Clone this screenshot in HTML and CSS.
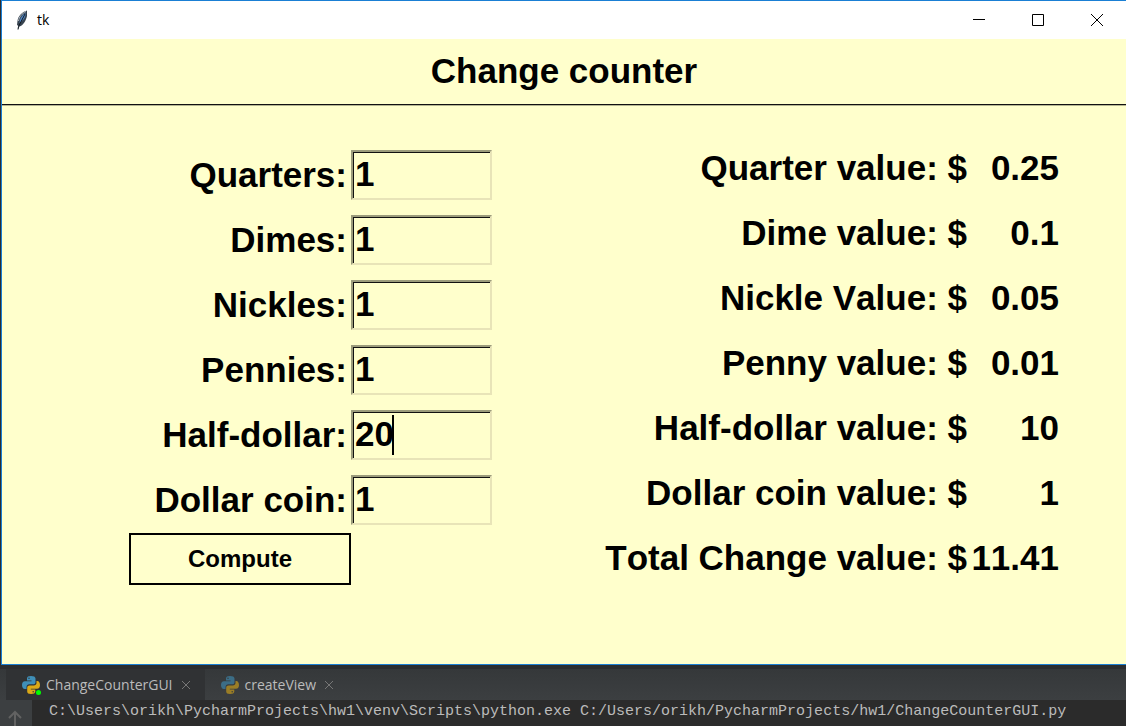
FILE: index.html
```html
<!DOCTYPE html>
<html lang="en">
<head>
<meta charset="utf-8">
<title>tk</title>
<link rel="stylesheet" href="styles.css">
</head>
<body>
<svg class="defs" aria-hidden="true">
  <symbol id="python" viewBox="0 0 18 18">
    <path fill="#3f8fb8" d="M9 0C6.300 0 5 .800 5 2.500V4.500H9.500V5.200H3C1 5.200 0 6.800 0 9s1 4 2.800 4H4.500V11c0-1.500 1.200-2.700 2.700-2.700h4.200c1.200 0 2.100-.900 2.100-2.100V2.500C13.500.800 11.700 0 9 0Z"/>
    <circle cx="7" cy="2.300" r=".8" fill="#3c3f41"/>
    <path fill="#dba917" d="M9 18c2.700 0 4.300-.800 4.300-2.500V13.500H8.800V12.800H15c2 0 3-1.600 3-3.800s-1-4-2.800-4H14.500V7c0 1.500-1.200 2.500-2.700 2.500H7.600C6.400 9.500 5.200 10.400 5.200 11.600V15.500C5.200 17.200 6.300 18 9 18Z"/>
    <circle cx="11.200" cy="15.700" r=".8" fill="#3c3f41"/>
  </symbol>
</svg>
<main class="window">
  <header class="titlebar">
    <svg class="feather" viewBox="0 0 14 20" aria-hidden="true">
      <path d="M12 .5C7 2 3 6 2.500 11L2 15l1.500 1L3 19.500l1.500-3C8 15.500 11 11 12 6Z" fill="#37434f"/>
      <path d="M10.500 3C7 5 5 8 4.500 13l4-3.500C10 7.500 11 5 10.500 3Z" fill="#4e86c6"/>
      <path d="M11 1.500C7 3.500 4 7 3.500 11" fill="none" stroke="#b4bdc6"/>
      <path d="M10 4 3.500 16.500 3 19.500" fill="none" stroke="#101820"/>
    </svg>
    <span class="caption">tk</span>
    <div class="controls">
      <button type="button" class="control" aria-label="Minimize"><svg viewBox="0 0 12 12"><path d="M0 5.500H12"/></svg></button>
      <button type="button" class="control" aria-label="Maximize"><svg viewBox="0 0 12 12"><path d="M.5.500H11.500V11.500H.5Z"/></svg></button>
      <button type="button" class="control" aria-label="Close"><svg viewBox="0 0 12 12"><path d="M0 0 12 12M12 0 0 12"/></svg></button>
    </div>
  </header>
  <h1 class="heading">Change counter</h1>
  <div class="panels">
    <form class="coins">
      <label for="quarters">Quarters:</label><div class="entry"><input id="quarters" value="1"></div>
      <label for="dimes">Dimes:</label><div class="entry"><input id="dimes" value="1"></div>
      <label for="nickles">Nickles:</label><div class="entry"><input id="nickles" value="1"></div>
      <label for="pennies">Pennies:</label><div class="entry"><input id="pennies" value="1"></div>
      <label for="half">Half-dollar:</label><div class="entry"><input id="half" value="20"><span class="caret"></span></div>
      <label for="dollar">Dollar coin:</label><div class="entry"><input id="dollar" value="1"></div>
      <button type="button" class="compute">Compute</button>
    </form>
    <table class="values">
      <tr><th scope="row">Quarter value: $</th><td>0.25</td></tr>
      <tr><th scope="row">Dime value: $</th><td>0.1</td></tr>
      <tr><th scope="row">Nickle Value: $</th><td>0.05</td></tr>
      <tr><th scope="row">Penny value: $</th><td>0.01</td></tr>
      <tr><th scope="row">Half-dollar value: $</th><td>10</td></tr>
      <tr><th scope="row">Dollar coin value: $</th><td>1</td></tr>
      <tr><th scope="row">Total Change value: $</th><td>11.41</td></tr>
    </table>
  </div>
</main>
<section class="ide">
  <nav class="tabs">
    <div class="tab active">
      <span class="badge"><svg class="python"><use href="#python"/></svg></span>
      <span>ChangeCounterGUI</span>
      <button type="button" class="close" aria-label="Close ChangeCounterGUI"><svg viewBox="0 0 10 10"><path d="M1 1 9 9M9 1 1 9"/></svg></button>
    </div>
    <div class="tab">
      <svg class="python dim"><use href="#python"/></svg>
      <span>createView</span>
      <button type="button" class="close" aria-label="Close createView"><svg viewBox="0 0 10 10"><path d="M1 1 9 9M9 1 1 9"/></svg></button>
    </div>
  </nav>
  <div class="console">
    <div class="gutter"><svg viewBox="0 0 14 16"><path d="M7 16V2M1 8 7 2 13 8"/></svg></div>
    <code class="output">C:\Users\orikh\PycharmProjects\hw1\venv\Scripts\python.exe C:/Users/orikh/PycharmProjects/hw1/ChangeCounterGUI.py</code>
  </div>
</section>
</body>
</html>
```
FILE: styles.css
```css
* { box-sizing: border-box; }

body {
  margin: 0;
  min-height: 100vh;
  display: flex;
  flex-direction: column;
  background: #2b2d30;
  overflow: hidden;
}

button { padding: 0; background: none; border: 0; }
svg { display: block; }
.defs { position: absolute; width: 0; height: 0; }

.window {
  flex: 1;
  display: flex;
  flex-direction: column;
  margin-left: 1px;
  border: 1px solid #1a7fd4;
  border-right: 0;
  background: #ffffcc;
  color: #000;
  font-family: "Liberation Sans", Arial, sans-serif;
  font-size: 35px;
  font-weight: bold;
  font-kerning: none;
}

.titlebar {
  display: flex;
  align-items: center;
  height: 38px;
  padding-left: 13px;
  background: #fff;
}
.feather { width: 14px; height: 20px; }
.caption {
  margin-left: 8px;
  font: 14px/18px "Open Sans", "Noto Sans", sans-serif;
}
.controls { display: flex; margin-left: auto; }
.control { display: grid; place-items: center; width: 59px; height: 38px; }
.control svg { width: 12px; height: 12px; fill: none; stroke: #000; }

.heading {
  margin: 0;
  padding: 12px 0 13px;
  border-bottom: 1px solid #111;
  box-shadow: 0 1px #b5b592;
  font-size: 35px;
  line-height: 40px;
  text-align: center;
}

.panels {
  display: grid;
  grid-template-columns: 1fr 1fr;
  align-items: start;
}

.coins {
  display: grid;
  grid-template-columns: 1fr 141px;
  row-gap: 15px;
  align-items: center;
  padding: 45px 72px 0 0;
}
.coins label {
  padding-right: 4px;
  line-height: 48px;
  text-align: right;
}
.entry { position: relative; }
.entry input {
  display: block;
  width: 100%;
  height: 50px;
  padding: 0 2px 2px;
  border: 2px solid;
  border-color: #9c9c7c #e8e4b8 #e8e4b8 #9c9c7c;
  border-radius: 0;
  outline: 0;
  box-shadow: inset 1px 1px #111;
  background: none;
  color: inherit;
  font: inherit;
}
.caret {
  position: absolute;
  top: 5px;
  left: 41px;
  width: 2px;
  height: 40px;
  background: #000;
}
.compute {
  justify-self: end;
  width: 222px;
  height: 52px;
  margin-top: -7px;
  border: 2px solid #000;
  color: inherit;
  font: bold 24px "Liberation Sans", Arial, sans-serif;
}

.values {
  justify-self: end;
  margin: 30px 67px 0 0;
  border-collapse: collapse;
}
.values th, .values td {
  height: 65px;
  padding: 0;
  line-height: 65px;
  text-align: right;
  white-space: nowrap;
}
.values td { width: 92px; }

.ide {
  padding-top: 4px;
  color: #bbb;
  font: 14px "Open Sans", "Noto Sans", sans-serif;
}
.tabs {
  display: flex;
  height: 31px;
  padding-left: 6px;
  background: linear-gradient(#35383a, #3c3f41);
}
.tab {
  display: flex;
  align-items: center;
  gap: 6px;
  padding: 0 14px 0 16px;
}
.active { background: #303234; }
.badge { position: relative; }
.badge::after {
  content: "";
  position: absolute;
  right: -1px;
  bottom: -1px;
  width: 5px;
  height: 5px;
  border-radius: 50%;
  background: #0f0;
}
.python { width: 18px; height: 18px; }
.dim { opacity: 0.6; }
.close { margin-left: 2px; }
.close svg { width: 10px; height: 10px; fill: none; stroke: #777; }

.console { display: flex; height: 26px; background: #2b2b2b; }
.gutter {
  width: 32px;
  padding: 10px 0 0 8px;
  background: #3c3f41;
}
.gutter svg { width: 14px; height: 16px; fill: none; stroke: #626262; stroke-width: 2; }
.output {
  padding-left: 17px;
  font: 15px/24px "Liberation Mono", "Courier New", monospace;
  white-space: nowrap;
}
```
